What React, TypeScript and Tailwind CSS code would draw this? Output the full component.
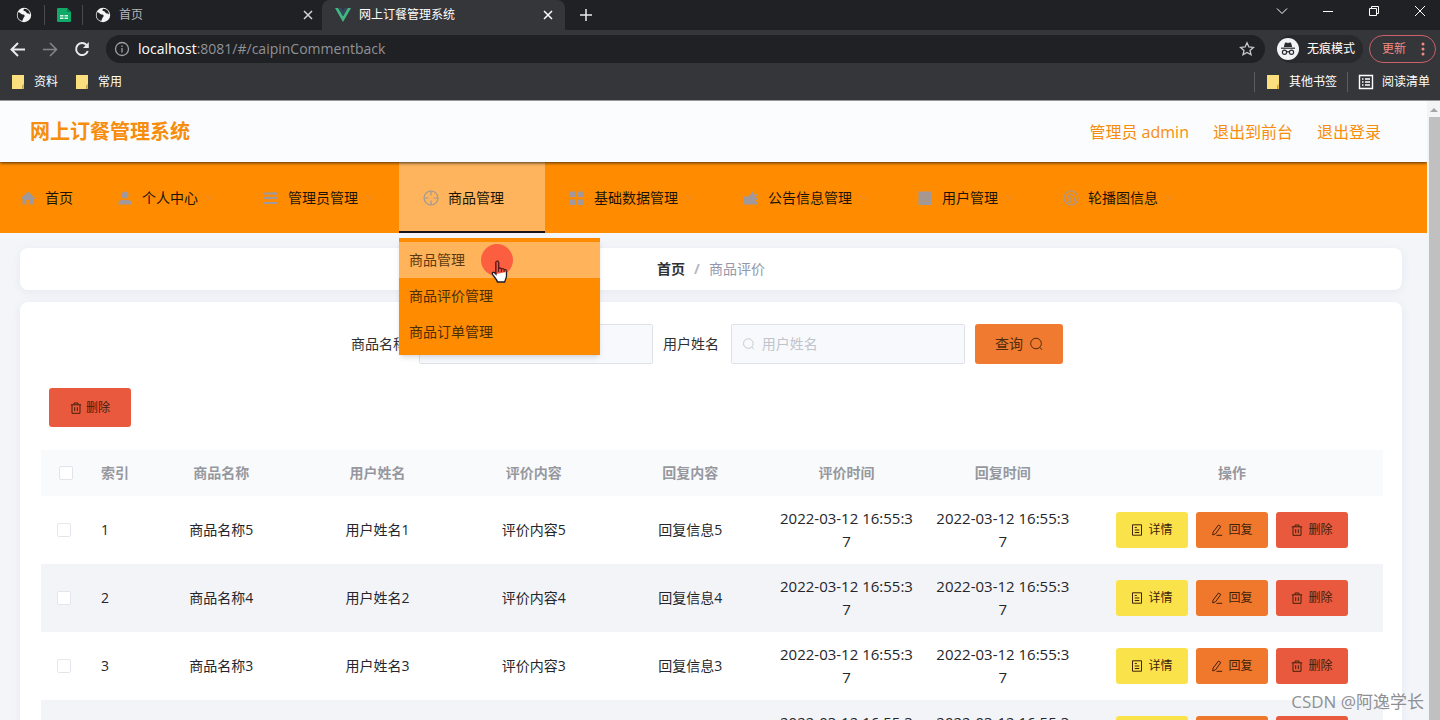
import React from 'react';

const pageFont = "font-['Open_Sans','Noto_Sans_CJK_SC',sans-serif]";

interface IconProps {
  className?: string;
}

/* ---------- Browser icons ---------- */

function GlobeIcon({ className = 'w-4 h-4' }: IconProps) {
  return (
    <svg viewBox="0 0 16 16" className={className} aria-hidden="true">
      <circle cx="8" cy="8" r="7.2" fill="#f4f4f5" />
      <path
        d="M2.2 5.2c1.8.2 2.2 1 3.2 1.8 1.2 1 2.6.2 3.2 1.4.4 1-.8 1.400-1 2.400-.2.8-.8 1.600-1.400 3.200-2.400-.6-4.600-2.800-4.600-5.600 0-1.200.2-2.200.6-3.200zM8.400 1.800c-.8.6-1.400 1.400-.6 2 .8.6 1.800.2 2.200 1.200.4.8 1.200 1.600 2.200 1.600.8 0 1.200.6 1.800 1 .2-2.800-2.200-5.800-5.600-5.800z"
        fill="#202124"
      />
    </svg>
  );
}

function SheetIcon() {
  return (
    <svg viewBox="0 0 14 14" className="w-3.5 h-3.5" aria-hidden="true">
      <path d="M1 0h9l4 4v9a1 1 0 0 1-1 1H1a1 1 0 0 1-1-1V1a1 1 0 0 1 1-1z" fill="#0fa968" />
      <path d="M10 0l4 4h-4z" fill="#08804c" />
      <path d="M3 7h3.500v1.500H3zM7.500 7H11v1.500H7.500zM3 9.500h3.500V11H3zM7.500 9.500H11V11H7.500z" fill="#d8f5e8" />
    </svg>
  );
}

function VueIcon() {
  return (
    <svg viewBox="0 0 16 14" className="w-4 h-3.5" aria-hidden="true">
      <path d="M0 0h3.200L8 8.300 12.800 0H16L8 13.900z" fill="#41b883" />
      <path d="M3.200 0H6.100L8 3.300 9.900 0h2.900L8 8.300z" fill="#35495e" />
    </svg>
  );
}

function CrossIcon({ className = 'w-2.5 h-2.5' }: IconProps) {
  return (
    <svg viewBox="0 0 10 10" className={className} fill="none" stroke="currentColor" strokeWidth="1.5" aria-hidden="true">
      <path d="M1 1l8 8M9 1l-8 8" />
    </svg>
  );
}

function FolderIcon() {
  return (
    <svg viewBox="0 0 12 14" className="w-3 h-3.5" aria-hidden="true">
      <path d="M0 0h12v9.500l-1.500 1V14H0z" fill="#fbdf7e" />
      <path d="M10.500 10.500L12 9.500V14h-1.500z" fill="#e8b93c" />
    </svg>
  );
}

function IncognitoIcon() {
  return (
    <svg viewBox="0 0 22 22" className="w-[22px] h-[22px]" aria-hidden="true">
      <circle cx="11" cy="11" r="11" fill="#f1f3f4" />
      <path d="M7.800 5.200c.2-.6.800-.8 1.300-.6l1.900.5 1.900-.5c.5-.2 1.100 0 1.300.6L15.200 9H6.800z" fill="#2b2c30" />
      <path d="M4 10.200h14" stroke="#2b2c30" strokeWidth="1.200" />
      <g fill="none" stroke="#2b2c30" strokeWidth="1.200">
        <circle cx="7.500" cy="14.200" r="2.100" />
        <circle cx="14.500" cy="14.200" r="2.100" />
        <path d="M9.600 14q1.400-.8 2.800 0" />
      </g>
    </svg>
  );
}

/* ---------- Menu icons ---------- */

function HomeIcon() {
  return (
    <svg viewBox="0 0 16 16" className="w-4 h-4" fill="currentColor" aria-hidden="true">
      <path d="M8 1.500L.8 8.200l1.100 1.100.6-.5V14.500h3.800V10h3.400v4.500h3.800V8.800l.6.500 1.100-1.100z" />
    </svg>
  );
}

function UserIcon() {
  return (
    <svg viewBox="0 0 16 16" className="w-4 h-4" fill="currentColor" aria-hidden="true">
      <circle cx="8" cy="5" r="3.500" />
      <path d="M1.500 14.500v-2c0-1.500 1.500-2.500 3.500-2.500h6c2 0 3.500 1 3.500 2.500v2z" />
    </svg>
  );
}

function OperationIcon() {
  return (
    <svg viewBox="0 0 16 16" className="w-4 h-4" fill="none" stroke="currentColor" strokeWidth="1.800" aria-hidden="true">
      <path d="M1 3.500h14M1 8h14M1 13h14" />
      <path d="M11 2v3M5 6.500v3" strokeWidth="2" />
    </svg>
  );
}

function AimIcon() {
  return (
    <svg viewBox="0 0 16 16" className="w-4 h-4" fill="none" stroke="currentColor" strokeWidth="1.200" aria-hidden="true">
      <circle cx="8" cy="8" r="7" />
      <path d="M8 1v4.500M8 10.500V15M1 8h4.500M10.500 8H15" />
    </svg>
  );
}

function GridIcon() {
  return (
    <svg viewBox="0 0 16 16" className="w-4 h-4" fill="currentColor" aria-hidden="true">
      <path d="M1 1.500h6V7H1zM9 1.500h6V7H9zM1 9.500h6V15H1zM9 9.500h6V15H9z" />
    </svg>
  );
}

function NoticeIcon() {
  return (
    <svg viewBox="0 0 16 16" className="w-4 h-4" fill="currentColor" aria-hidden="true">
      <path d="M1 6.500h4L8.500 3.500 9 1.500l2 .5v2.500h3V6.500h-2v1.500h2.500V10H12v1.500h3V14.500H1z" />
    </svg>
  );
}

function OrderIcon() {
  return (
    <svg viewBox="0 0 16 16" className="w-4 h-4" aria-hidden="true">
      <path d="M1.500 1.500h13V15h-13z" fill="currentColor" />
      <path d="M4 5h8M4 8h8M4 11h8" stroke="#b3956f" />
    </svg>
  );
}

function CoinIcon() {
  return (
    <svg viewBox="0 0 16 16" className="w-4 h-4" fill="none" stroke="currentColor" strokeWidth="1.200" aria-hidden="true">
      <circle cx="8" cy="8" r="7" />
      <path d="M5.500 12.500C3.500 9.500 5 5.500 8 4c3 1.500 4.500 5.500 2.500 8.500M8 7v6" />
    </svg>
  );
}

function ArrowDown() {
  return (
    <svg viewBox="0 0 10 10" className="w-2.5 h-2.5" fill="none" stroke="currentColor" aria-hidden="true">
      <path d="M1 2.500l4 4 4-4" />
    </svg>
  );
}

/* ---------- Button icons ---------- */

function SearchIcon({ className = 'w-3.5 h-3.5' }: IconProps) {
  return (
    <svg viewBox="0 0 14 14" className={className} fill="none" stroke="currentColor" aria-hidden="true">
      <circle cx="7" cy="6.500" r="5.300" />
      <path d="M10.700 10.200l2.300 2.600" />
    </svg>
  );
}

function DeleteIcon() {
  return (
    <svg viewBox="0 0 12 12" className="w-3 h-3" fill="none" stroke="currentColor" aria-hidden="true">
      <path d="M.8 2.800h10.400M4 2.500V1h4v1.500M2 3v8.300h8V3M4.700 5.200v3.800M7.300 5.200v3.800" />
    </svg>
  );
}

function DetailIcon() {
  return (
    <svg viewBox="0 0 12 12" className="w-3 h-3" fill="none" stroke="currentColor" aria-hidden="true">
      <path d="M1.500.8h9v10.400h-9zM3.800 3.500h2M3.800 6h4.500M3.800 8.500h4.500" />
    </svg>
  );
}

function EditIcon() {
  return (
    <svg viewBox="0 0 12 12" className="w-3 h-3" fill="none" stroke="currentColor" aria-hidden="true">
      <path d="M7.500 1L9.800 2.500 4.500 9.800 1.800 11 2 8.200zM5.500 11.300h5.700" />
    </svg>
  );
}

function HandPointer() {
  return (
    <svg viewBox="0 0 20 24" className="w-5 h-6" aria-hidden="true">
      <path
        d="M6 2.500C6 .8 8.600.8 8.600 2.500V9c.6-1.200 2.600-1 2.800.4.800-1 2.600-.6 2.700.6 1-.6 2.400 0 2.400 1.400V16c0 2.500-1.500 3.500-1.800 6H7.500C7 19.500 4 17 2.500 14.200c-.8-1.500.8-2.600 2-1.500L6 14.200z"
        fill="#fff"
        stroke="#1b1b28"
        strokeWidth="1.300"
      />
      <path d="M6 14V2.500C6 .8 8.600.8 8.600 2.500V9c.6-1.200 2.600-1 2.800.4.800-1 2.600-.6 2.700.6 1-.6 2.400 0 2.400 1.400V12z" fill="#f2553f" />
      <path d="M6 14V2.500C6 .8 8.600.8 8.600 2.500V9c.6-1.200 2.600-1 2.800.4.800-1 2.600-.6 2.700.6 1-.6 2.400 0 2.400 1.400V12" fill="none" stroke="#5c1717" />
      <path d="M8.600 8.500V12M11.400 9.500V12M14.100 10v2" stroke="#5c1717" />
    </svg>
  );
}

/* ---------- Data ---------- */

const menuItems = [
  { label: '个人中心', icon: <UserIcon /> },
  { label: '管理员管理', icon: <OperationIcon /> },
  { label: '商品管理', icon: <AimIcon />, children: ['商品管理', '商品评价管理', '商品订单管理'] },
  { label: '基础数据管理', icon: <GridIcon /> },
  { label: '公告信息管理', icon: <NoticeIcon /> },
  { label: '用户管理', icon: <OrderIcon /> },
  { label: '轮播图信息', icon: <CoinIcon /> },
];

const columns = ['商品名称', '用户姓名', '评价内容', '回复内容', '评价时间', '回复时间'];

const rows = [
  { id: 1, goods: '商品名称5', user: '用户姓名1', comment: '评价内容5', reply: '回复信息5' },
  { id: 2, goods: '商品名称4', user: '用户姓名2', comment: '评价内容4', reply: '回复信息4' },
  { id: 3, goods: '商品名称3', user: '用户姓名3', comment: '评价内容3', reply: '回复信息3' },
  { id: 4, goods: '商品名称2', user: '用户姓名1', comment: '评价内容2', reply: '回复信息2' },
];

const commentTime = '2022-03-12 16:55:37';

/* ---------- Browser chrome ---------- */

function BrowserChrome() {
  return (
    <div className="shrink-0 bg-[#35363a] text-[#e8eaed] border-b border-[#96969c]">
      {/* Tab strip */}
      <div className="flex h-[30px] items-center bg-[#202124] text-xs">
        <div className="flex h-full w-11 items-center justify-center pl-1">
          <GlobeIcon />
        </div>
        <div className="flex h-5 w-[39px] items-center justify-center border-x border-[#4a4b4f]">
          <SheetIcon />
        </div>
        <div className="flex h-full w-[239px] items-center pl-3 pr-[9px]">
          <GlobeIcon />
          <span className="ml-2 flex-1 text-[#b4b6ba]">首页</span>
          <button type="button" aria-label="关闭首页标签" className="text-[#d4d5d8]">
            <CrossIcon />
          </button>
        </div>
        <div className="flex h-full w-[243px] items-center rounded-t-lg bg-[#35363a] pl-[13px] pr-[12px]">
          <VueIcon />
          <span className="ml-2 flex-1 text-white">网上订餐管理系统</span>
          <button type="button" aria-label="关闭标签" className="text-white">
            <CrossIcon />
          </button>
        </div>
        <button type="button" aria-label="新标签页" className="ml-[15px]">
          <svg viewBox="0 0 12 12" className="w-3 h-3" stroke="currentColor" strokeWidth="1.500" aria-hidden="true">
            <path d="M6 0v12M0 6h12" />
          </svg>
        </button>
        <div className="ml-auto flex items-center gap-[34px] pr-3.5 pb-2 text-white">
          <button type="button" aria-label="搜索标签页">
            <svg viewBox="0 0 12 12" className="w-3 h-3" fill="none" stroke="currentColor" aria-hidden="true">
              <path d="M1 3.500l5 5 5-5" />
            </svg>
          </button>
          <button type="button" aria-label="最小化">
            <svg viewBox="0 0 12 12" className="w-3 h-3" stroke="currentColor" aria-hidden="true">
              <path d="M1 6.500h10" />
            </svg>
          </button>
          <button type="button" aria-label="还原">
            <svg viewBox="0 0 12 12" className="w-3 h-3" fill="none" stroke="currentColor" aria-hidden="true">
              <path d="M1.500 3.500h7v7h-7zM3.500 3.500v-2h7v7h-2" />
            </svg>
          </button>
          <button type="button" aria-label="关闭">
            <svg viewBox="0 0 12 12" className="w-3 h-3" stroke="currentColor" aria-hidden="true">
              <path d="M1 1l10 10M11 1L1 11" />
            </svg>
          </button>
        </div>
      </div>

      {/* Address bar */}
      <div className="flex h-[38px] items-center pl-2.5 pr-1">
        <button type="button" aria-label="后退">
          <svg viewBox="0 0 16 16" className="w-4 h-4" fill="none" stroke="currentColor" strokeWidth="2" aria-hidden="true">
            <path d="M15 8.500H2M8 2L1.500 8.500 8 15" />
          </svg>
        </button>
        <button type="button" aria-label="前进" className="ml-4 text-[#85868a]">
          <svg viewBox="0 0 16 16" className="w-4 h-4" fill="none" stroke="currentColor" strokeWidth="1.500" aria-hidden="true">
            <path d="M1 8.500h13M8 2l6.500 6.500L8 15" />
          </svg>
        </button>
        <button type="button" aria-label="重新加载" className="ml-4">
          <svg viewBox="0 0 16 16" className="w-4 h-4" fill="none" stroke="currentColor" strokeWidth="2" aria-hidden="true">
            <path d="M13.800 10A6 6 0 1 1 12.500 4" />
            <path d="M14.800 1v6H9z" fill="currentColor" stroke="none" />
          </svg>
        </button>
        <div className="ml-4 flex h-7 flex-1 items-center rounded-full bg-[#202124] pl-2 pr-2.5">
          <svg viewBox="0 0 16 16" className="w-4 h-4 text-[#9aa0a6]" fill="none" stroke="currentColor" strokeWidth="1.300" aria-hidden="true">
            <circle cx="8" cy="8" r="6.500" />
            <path d="M8 7v4.500M8 4.500V6" />
          </svg>
          <p className="ml-2 flex-1 text-sm text-[#8f9297]">
            <span className="text-white">localhost</span>:8081/#/caipinCommentback
          </p>
          <button type="button" aria-label="添加书签" className="text-[#c9cbce]">
            <svg viewBox="0 0 16 16" className="w-4 h-4" fill="none" stroke="currentColor" strokeWidth="1.300" aria-hidden="true">
              <path d="M8 1.800l1.900 4.200 4.500.4-3.400 3 1 4.400L8 11.500l-4 2.300 1-4.400-3.400-3 4.500-.4z" />
            </svg>
          </button>
        </div>
        <div className="ml-3 flex h-7 items-center gap-2 rounded-full bg-[#28292c] pr-2 text-xs text-white">
          <IncognitoIcon />
          无痕模式
        </div>
        <button
          type="button"
          className="ml-1.5 flex h-7 items-center gap-[15px] rounded-full border border-[#c9606a] pl-3 pr-2.5 text-xs text-[#f28b82]"
        >
          更新
          <svg viewBox="0 0 4 14" className="w-1 h-3.5" fill="currentColor" aria-hidden="true">
            <circle cx="2" cy="2" r="1.500" />
            <circle cx="2" cy="7" r="1.500" />
            <circle cx="2" cy="12" r="1.500" />
          </svg>
        </button>
      </div>

      {/* Bookmarks */}
      <div className="flex h-8 items-start pt-1 pl-3 pr-2.5 text-xs leading-5 text-white">
        <a href="#ziliao" className="flex items-center gap-2.5">
          <FolderIcon />
          资料
        </a>
        <a href="#changyong" className="ml-[18px] flex items-center gap-2.5">
          <FolderIcon />
          常用
        </a>
        <a href="#other" className="ml-auto flex items-center gap-2.5 border-l border-[#5c5d61] pl-3">
          <FolderIcon />
          其他书签
        </a>
        <a href="#reading" className="ml-2.5 flex items-center gap-2 border-l border-[#5c5d61] pl-2.5">
          <svg viewBox="0 0 16 16" className="w-4 h-4" fill="none" stroke="currentColor" strokeWidth="1.400" aria-hidden="true">
            <path d="M1.500 1.500h13v13h-13zM4 5h1.500M4 8h1.500M4 11h1.500M7 5h5M7 8h5M7 11h5" />
          </svg>
          阅读清单
        </a>
      </div>
    </div>
  );
}

/* ---------- Page ---------- */

function TopMenu() {
  return (
    <nav className="flex h-[71px] bg-[#ff8c00] text-sm text-[#1c1408]">
      <a href="#home" className="flex items-center px-5">
        <span className="mr-[9px] text-[#a0989a]">
          <HomeIcon />
        </span>
        首页
      </a>
      {menuItems.map((item) => (
        <div key={item.label} className="relative">
          <button
            type="button"
            className={
              item.children
                ? 'flex h-full items-center bg-[#fdb45c] px-6 shadow-[inset_0_-2px_0_#17121c]'
                : 'flex h-full items-center px-6'
            }
          >
            <span className="mr-[9px] text-[#a0989a]">{item.icon}</span>
            {item.label}
            <span className={item.children ? 'ml-[7px] text-[#fdb45c]' : 'ml-[7px] text-[#e08d45]'}>
              <ArrowDown />
            </span>
          </button>
          {item.children && (
            <div className="absolute top-full left-0 z-20 mt-[5px] w-[201px] bg-[#ff8c00] pt-1 pb-[5px] shadow-md">
              {item.children.map((child, index) => (
                <a
                  key={child}
                  href={`#sub-${index}`}
                  className={
                    index === 0
                      ? 'flex h-9 items-center bg-[#ffb35b] px-2.5 text-[#5b3a10]'
                      : 'flex h-9 items-center px-2.5 text-[#4b2d08]'
                  }
                >
                  {child}
                </a>
              ))}
              {/* Click highlight with the pointer over it */}
              <div className="pointer-events-none absolute top-1.5 left-[82px] h-8 w-8 rounded-full bg-[#fb5f3f]" />
              <div className="pointer-events-none absolute top-[22px] left-[91px]">
                <HandPointer />
              </div>
            </div>
          )}
        </div>
      ))}
    </nav>
  );
}

function SearchForm() {
  return (
    <form className="flex items-center justify-center text-sm text-[#303133]">
      <label htmlFor="goods" className="mr-3">
        商品名称
      </label>
      <div className="mr-2.5 flex h-10 w-[234px] items-center gap-[7px] rounded-xs border border-[#dfe1e8] bg-[#f8f9fc] px-2.5 text-[#c0c4cc]">
        <SearchIcon />
        <input id="goods" placeholder="商品名称" className="w-full min-w-0 bg-transparent outline-none placeholder:text-[#c0c4cc]" />
      </div>
      <label htmlFor="user" className="mr-3">
        用户姓名
      </label>
      <div className="mr-2.5 flex h-10 w-[234px] items-center gap-[7px] rounded-xs border border-[#dfe1e8] bg-[#f8f9fc] px-2.5 text-[#c0c4cc]">
        <SearchIcon />
        <input id="user" placeholder="用户姓名" className="w-full min-w-0 bg-transparent outline-none placeholder:text-[#c0c4cc]" />
      </div>
      <button type="button" className="mr-2.5 flex h-10 items-center gap-1.5 rounded-[3px] bg-[#f07b30] px-5 text-[#4f2a0c]">
        查询
        <SearchIcon />
      </button>
    </form>
  );
}

function CommentTable() {
  return (
    <table className="mt-[23px] w-full table-fixed text-center text-sm text-[#25262b]">
      <colgroup>
        <col className="w-[50px]" />
        <col className="w-[52px]" />
        {columns.map((name) => (
          <col key={name} />
        ))}
        <col className="w-[302px]" />
      </colgroup>
      <thead>
        <tr className="h-[46px] bg-[#f9fafc] text-[#96989e]">
          <th className="px-[18px] text-left">
            <input type="checkbox" aria-label="全选" className="block h-3.5 w-3.5 appearance-none rounded-xs border border-[#e1e4eb] bg-white" />
          </th>
          <th className="px-2.5 text-left font-bold">索引</th>
          {columns.map((name) => (
            <th key={name} className="px-2.5 font-bold">
              {name}
            </th>
          ))}
          <th className="px-2.5 font-bold">操作</th>
        </tr>
      </thead>
      <tbody>
        {rows.map((row) => (
          <tr key={row.id} className="h-[68px] even:bg-[#f3f4f8]">
            <td className="px-4">
              <input type="checkbox" aria-label={`选择第${row.id}行`} className="block h-3.5 w-3.5 appearance-none rounded-xs border border-[#e4e6ec] bg-white" />
            </td>
            <td className="px-2.5 text-left">{row.id}</td>
            <td className="px-2.5">{row.goods}</td>
            <td className="px-2.5">{row.user}</td>
            <td className="px-2.5">{row.comment}</td>
            <td className="px-2.5">{row.reply}</td>
            <td className="px-2.5 text-[15px] leading-[23px] break-all">{commentTime}</td>
            <td className="px-2.5 text-[15px] leading-[23px] break-all">{commentTime}</td>
            <td className="px-2.5">
              <div className="flex justify-center gap-2 text-xs text-[#41200a]">
                <button type="button" className="flex h-9 w-[72px] items-center justify-center gap-[5px] rounded-[3px] bg-[#fae24b]">
                  <DetailIcon />
                  详情
                </button>
                <button type="button" className="flex h-9 w-[72px] items-center justify-center gap-[5px] rounded-[3px] bg-[#f0782c]">
                  <EditIcon />
                  回复
                </button>
                <button type="button" className="flex h-9 w-[72px] items-center justify-center gap-[5px] rounded-[3px] bg-[#e9593e]">
                  <DeleteIcon />
                  删除
                </button>
              </div>
            </td>
          </tr>
        ))}
      </tbody>
    </table>
  );
}

export default function App() {
  return (
    <div className={`relative flex h-screen flex-col overflow-hidden bg-[#f3f5f9] ${pageFont}`}>
      <BrowserChrome />
      <div className="flex min-h-0 flex-1">
        <div className="min-w-0 flex-1 overflow-hidden">
          <header className="relative z-10 flex h-[61px] items-center justify-between bg-[#fbfcfd] pl-[30px] pr-[46px] text-[#f78d0c] shadow-[0_1px_3px_rgba(30,25,10,0.8)]">
            <h1 className="text-xl font-bold">网上订餐管理系统</h1>
            <div className="flex gap-6 text-base">
              <span>管理员 admin</span>
              <a href="#front">退出到前台</a>
              <a href="#logout">退出登录</a>
            </div>
          </header>
          <TopMenu />

          <main className="pt-[15px] pr-[25px] pl-5">
            <ol className="flex h-[42px] items-center justify-center gap-[9px] rounded-lg bg-white text-sm shadow-[0_2px_8px_rgba(120,125,150,0.10)]">
              <li className="font-bold text-[#303133]">
                <a href="#home">首页</a>
              </li>
              <li className="font-bold text-[#b5b8c0]">/</li>
              <li className="text-[#9497ab]">商品评价</li>
            </ol>

            <section className="mt-3 rounded-lg bg-white pt-[22px] pr-[19px] pl-[21px] shadow-[0_2px_8px_rgba(120,125,150,0.10)]">
              <SearchForm />
              <button
                type="button"
                className="mt-6 ml-2 flex h-[39px] items-center gap-1 rounded-[3px] bg-[#e9593e] px-[21px] text-xs text-[#41200a]"
              >
                <DeleteIcon />
                删除
              </button>
              <CommentTable />
            </section>
          </main>
        </div>

        {/* Page scrollbar */}
        <div className="flex w-[13px] shrink-0 flex-col items-end bg-[#f3f4f5]">
          <svg viewBox="0 0 12 16" className="w-3 h-4" aria-hidden="true">
            <path d="M2 11l4-4 4 4z" fill="#a5a6a8" />
          </svg>
          <div className="w-[11px] flex-1 bg-[#bfc0bf]" />
        </div>
      </div>

      {/* Watermark */}
      <div className="pointer-events-none absolute right-4 bottom-1.5 text-[17px] text-[#8f9093]">CSDN @阿逸学长</div>
    </div>
  );
}
